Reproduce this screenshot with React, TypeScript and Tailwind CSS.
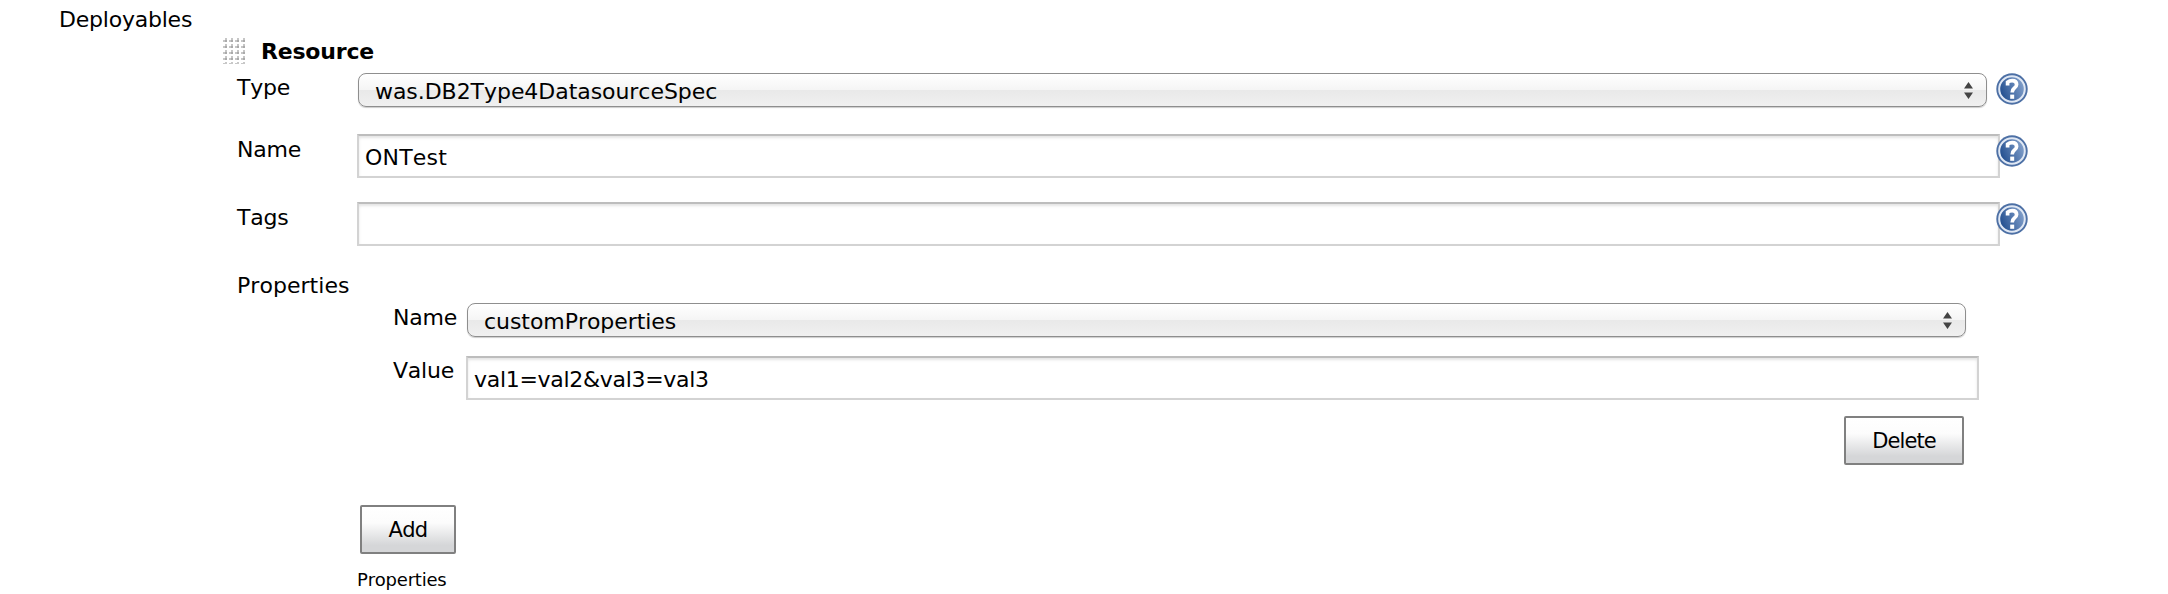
import type { ReactNode } from "react";

function HelpIcon({ className = "" }: { className?: string }) {
  return (
    <svg viewBox="0 0 32 32" className={`size-8 shrink-0 ${className}`} role="img" aria-label="Help">
      <defs>
        <linearGradient id="help" x1="0" y1="0.7" x2="1" y2="0.3">
          <stop offset="0" stopColor="#1d4a8c" />
          <stop offset="1" stopColor="#86a3cd" />
        </linearGradient>
      </defs>
      <circle cx="16" cy="16" r="15.7" fill="#4d70a5" />
      <circle cx="16" cy="16" r="12.8" fill="url(#help)" stroke="#e0e8f4" strokeWidth="2" />
      <path
        d="M11.6 12.6V9.2Q13.6 7.6 16.2 7.6Q20.6 7.6 20.6 11.5Q20.6 13.6 18.2 15.3Q16.2 16.8 16.2 19.4"
        fill="none"
        stroke="#fff"
        strokeWidth="3.7"
      />
      <rect x="14.2" y="21.6" width="4" height="4.2" fill="#fff" />
    </svg>
  );
}

function Grip() {
  return (
    <svg viewBox="0 0 24 27" className="h-[27px] w-6 shrink-0" aria-hidden="true">
      {[0, 1, 2, 3, 4].map((row) =>
        [0, 1, 2, 3].map((col) => (
          <g key={`${row}-${col}`} transform={`translate(${col * 6} ${row * 6})`}>
            {row === 4 ? (
              <path d="M0 1h2v1h-2zM2 0h2v2h-2z" fill="#c8c8c8" />
            ) : (
              <>
                <path d="M0 2h2v2h-2zM2 0h2v2h-2z" fill="#c6c6c6" />
                <path d="M2 2h2v2h-2z" fill="#aaa" />
              </>
            )}
          </g>
        )),
      )}
    </svg>
  );
}

function Select({ children }: { children: ReactNode }) {
  return (
    <div className="flex h-[34px] w-full items-center justify-between rounded-lg border border-[#8e8e8e] bg-[linear-gradient(#fff_0%,#f5f5f5_49%,#e9e9e9_51%,#f0f0f0_100%)] pr-[13px] pl-4 shadow-[0_1px_1px_#0003]">
      <span className="pt-1 tracking-[-0.05px]">{children}</span>
      <svg viewBox="0 0 9 17" className="h-[17px] w-[9px]" aria-hidden="true">
        <path d="M4.5 0 9 6.5H0zM4.5 17 9 10.5H0z" fill="#444" />
      </svg>
    </div>
  );
}

function Field({ children }: { children?: ReactNode }) {
  return (
    <div className="flex h-11 w-full items-center border-2 border-[#d3d3d3] border-t-[#bdbdbd] bg-white px-[6px] pt-1 shadow-[inset_0_2px_3px_#0000001c]">
      {children}
    </div>
  );
}

function Button({ children, className }: { children: ReactNode; className: string }) {
  return (
    <button
      className={`h-[49px] rounded-[2px] border-2 border-[#808080] bg-[linear-gradient(#fff_0%,#fcfcfc_35%,#d5d6d8_85%,#d5d6d8_100%)] pt-[2px] text-[21px] leading-none ${className}`}
    >
      {children}
    </button>
  );
}

export default function App() {
  return (
    <main className="h-[594px] w-[2168px] overflow-hidden bg-white font-['DejaVu_Sans','Liberation_Sans',sans-serif] text-[22px] leading-[22px] tracking-[-0.22px] text-black [font-kerning:none]">
      <div className="flex pl-[58px]">
        <div className="w-[165px] pt-[9px] pl-px">Deployables</div>
        <section className="w-[1807px] pt-[38px]">
          <header className="flex h-[35px]">
            <Grip />
            <h2 className="pt-[3px] pl-[14px] font-bold tracking-[-0.2px]">Resource</h2>
          </header>
          <div className="grid grid-cols-[121px_1fr] pl-[13px]">
            <div className="pt-1 pl-px">Type</div>
            <div className="flex h-[61px] items-start justify-between">
              <div className="ml-px w-[1629px]">
                <Select>was.DB2Type4DatasourceSpec</Select>
              </div>
              <HelpIcon className="mr-[2px]" />
            </div>
            <div className="pt-[5px] pl-px">Name</div>
            <div className="flex h-[68px] items-start">
              <div className="w-[1643px] shrink-0">
                <Field>
                  <span className="tracking-[0.2px]">ONTest</span>
                </Field>
              </div>
              <HelpIcon className="mt-px -ml-1" />
            </div>
            <div className="pt-[5px] pl-px">Tags</div>
            <div className="flex h-[68px] items-start">
              <div className="w-[1643px] shrink-0">
                <Field />
              </div>
              <HelpIcon className="mt-px -ml-1" />
            </div>
            <div className="pt-[5px] pl-px tracking-[0.05px]">Properties</div>
            <div className="pt-[33px] pl-9">
              <div className="flex h-[53px]">
                <div className="w-[74px] pt-1">Name</div>
                <div className="w-[1499px]">
                  <Select>customProperties</Select>
                </div>
              </div>
              <div className="flex h-[60px]">
                <div className="w-[73px] pt-1">Value</div>
                <div className="w-[1513px]">
                  <Field>
                    <span className="tracking-[-0.3px]">val1=val2&amp;val3=val3</span>
                  </Field>
                </div>
              </div>
              <div className="flex h-[89px] w-[1571px] justify-end">
                <Button className="w-[120px] tracking-[-0.9px]">Delete</Button>
              </div>
            </div>
            <div />
            <div>
              <Button className="ml-[3px] w-24 tracking-[-0.6px]">Add</Button>
              <div className="pt-[15px] text-[18px]">Properties</div>
            </div>
          </div>
        </section>
      </div>
    </main>
  );
}
